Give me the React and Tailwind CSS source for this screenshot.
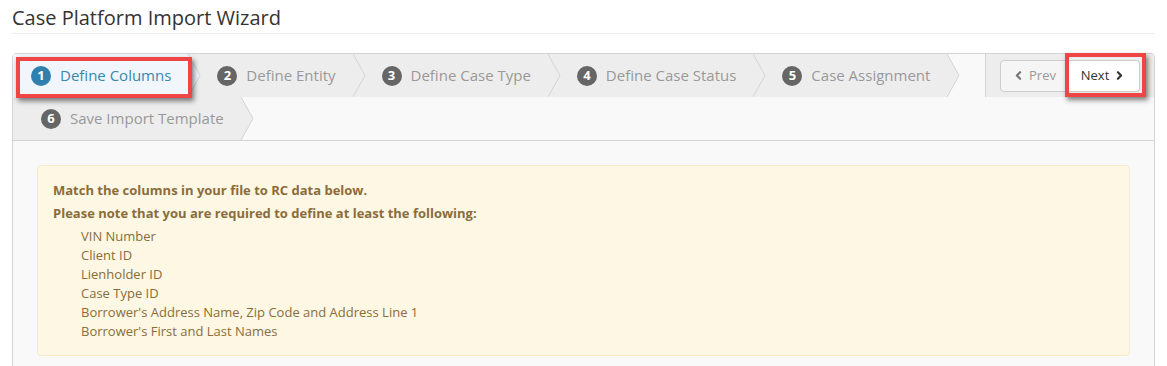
import React from 'react';
import { ChevronLeft, ChevronRight } from 'lucide-react';

const steps = [
    { num: 1, label: 'Define Columns' },
    { num: 2, label: 'Define Entity' },
    { num: 3, label: 'Define Case Type' },
    { num: 4, label: 'Define Case Status' },
    { num: 5, label: 'Case Assignment' },
    { num: 6, label: 'Save Import Template' },
];

const required = [
    'VIN Number',
    'Client ID',
    'Lienholder ID',
    'Case Type ID',
    "Borrower's Address Name, Zip Code and Address Line 1",
    "Borrower's First and Last Names",
];

function Step({ step, active, first }) {
    const fill = active ? '#f1f6fc' : '#ededed';
    return (
        <div
            className={
                'relative h-[43px] flex items-center pr-[18px] ' +
                (first ? 'pl-[18px] ' : 'pl-[28px] ') +
                (active ? 'bg-[#f1f6fc] text-[#3a87ad]' : 'bg-[#ededed] text-[#999]')
            }
        >
            <span
                className={
                    'w-[20px] h-[20px] rounded-full flex items-center justify-center text-[13px] font-bold text-white mr-[9px] ' +
                    (active ? 'bg-[#2f80ae]' : 'bg-[#666]')
                }
            >
                {step.num}
            </span>
            <span className="text-[15px] leading-none">{step.label}</span>
            <svg className="absolute top-0 right-[-12px] z-10" width="13" height="43" viewBox="0 0 13 43">
                <polygon points="0,0 12,21.5 0,43" fill={fill} />
                <polyline points="0,0 12,21.5 0,43" fill="none" stroke="#d4d4d4" strokeWidth="1" />
            </svg>
            {active && (
                <div className="absolute left-[3px] top-[3px] right-[-3px] bottom-[-1px] border-[4px] border-[#f04545] shadow-[2px_3px_5px_rgba(0,0,0,0.5)] z-20 pointer-events-none" />
            )}
        </div>
    );
}

export default function App() {
    return (
        <div className="bg-white min-h-screen px-3 font-['Open_Sans',sans-serif]">
            <h3 className="pt-[7px] pb-[4px] text-[20px] leading-[22px] text-[#333] border-b border-[#eee]">
                Case Platform Import Wizard
            </h3>

            <div className="mt-[19px] border border-[#d4d4d4] rounded-t-[4px] bg-[#f9f9f9]">
                <div className="flex flex-wrap border-b border-[#d4d4d4]">
                    {steps.slice(0, 5).map((s, i) => (
                        <Step key={s.num} step={s} active={i === 0} first={i === 0} />
                    ))}
                    <div className="ml-auto w-[169px] h-[43px] bg-[#ededed] border-l border-[#d4d4d4] flex items-center pl-[14px] rounded-tr-[4px]">
                        <div className="flex h-[32px] text-[13px]">
                            <button className="w-[68px] flex items-center justify-center gap-[4px] border border-[#ccc] rounded-l-[4px] bg-[#f5f5f5] text-[#999]">
                                <ChevronLeft size={13} strokeWidth={4} className="text-[#777]" />
                                Prev
                            </button>
                            <button className="relative w-[72px] flex items-center justify-center gap-[4px] border border-l-0 border-[#ccc] rounded-r-[4px] bg-white text-[#333]">
                                Next
                                <ChevronRight size={13} strokeWidth={4} className="text-[#333]" />
                                <div className="absolute left-[-3px] top-[-8px] right-[-7px] bottom-[-6px] border-[4px] border-[#f04545] shadow-[2px_3px_5px_rgba(0,0,0,0.5)] pointer-events-none" />
                            </button>
                        </div>
                    </div>
                    <div className="w-full flex">
                        <Step step={steps[5]} active={false} first={false} />
                    </div>
                </div>

                <div className="p-6 pb-[12px]">
                    <div className="border border-[#f8ebc8] bg-[#fdf7e3] rounded-[4px] px-[15px] pt-[15px] pb-[14px] text-[13px] leading-[19px] text-[#8a6d3b]">
                        <p className="font-bold mb-[4px]">Match the columns in your file to RC data below.</p>
                        <p className="font-bold mb-[4px]">Please note that you are required to define at least the following:</p>
                        <ul className="pl-[28px]">
                            {required.map(r => (
                                <li key={r}>{r}</li>
                            ))}
                        </ul>
                    </div>
                </div>
            </div>
        </div>
    );
}
